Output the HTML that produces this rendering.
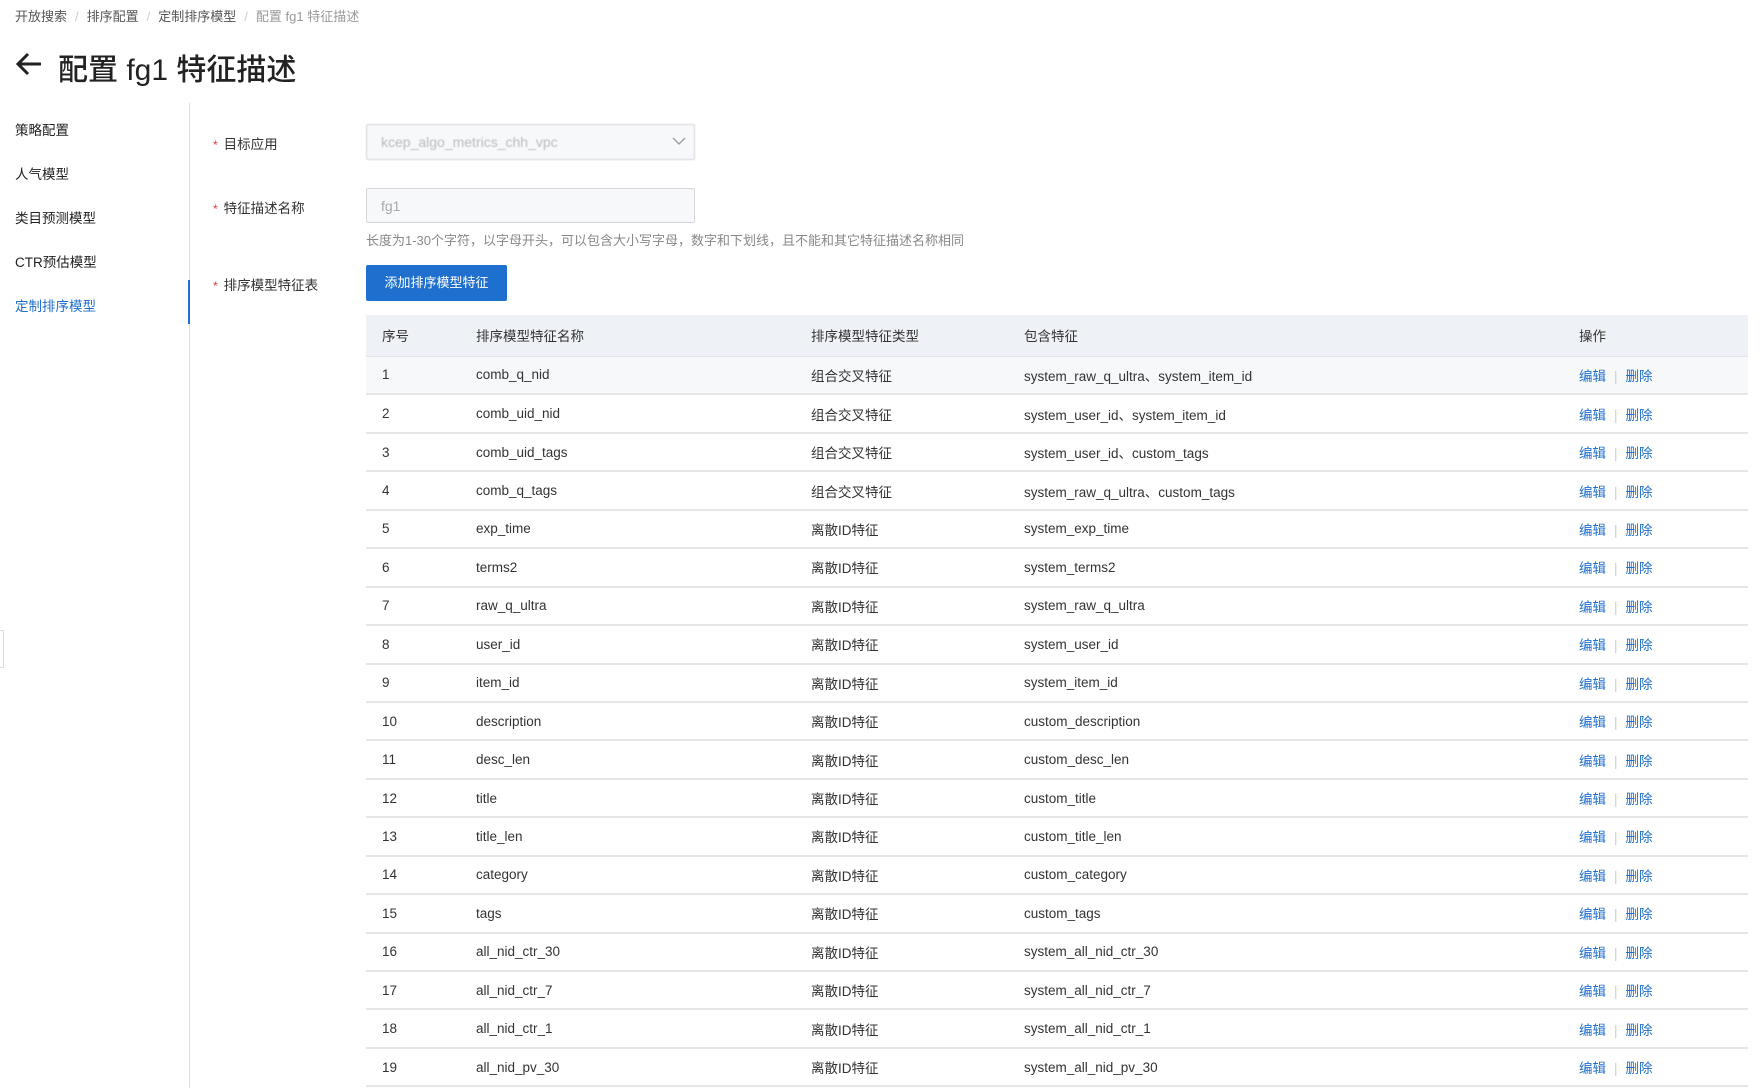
<!DOCTYPE html>
<html><head><meta charset="utf-8"><style>
*{box-sizing:border-box;margin:0;padding:0}
body{width:1762px;height:1088px;overflow:hidden;background:#fff;font-family:"Liberation Sans","Noto Sans CJK SC",sans-serif;color:#333;position:relative}
.a{position:absolute;white-space:nowrap}
.bc{top:6px;left:15px;font-size:13px;color:#555}
.bc span.s{color:#ccc;margin:0 8px}
.bc .last{color:#999}
.title{top:45px;left:58px;font-size:30px;color:#222;font-weight:500}
.side{left:15px;font-size:13.5px;color:#222}
.lbl{left:213px;font-size:13.5px;color:#333}
.lbl b{color:#e4393c;font-weight:normal;margin-right:6px;font-size:12px}
.box{left:366px;width:329px;border:1px solid #d4d6db;background:#f7f8fa;border-radius:2px}
table{position:absolute;left:366px;top:315px;width:1382px;border-collapse:collapse;font-size:13.5px;table-layout:fixed}
th{background:#eef1f6;height:41px;text-align:left;font-weight:normal;color:#333;border-bottom:1px solid #e2e4e8}
td{height:38.45px;border-bottom:2px solid #e6e6e6;color:#333}
tr.h td{background:#f7f8fa}
th:first-child,td:first-child{padding-left:16px}
.op{color:#1f6fce}.op i{font-style:normal;color:#ccc;margin:0 8px}
</style></head><body>
<div class="a bc">开放搜索<span class="s">/</span>排序配置<span class="s">/</span>定制排序模型<span class="s">/</span><span class="last">配置 fg1 特征描述</span></div>
<svg class="a" style="left:15px;top:52px" width="28" height="24" viewBox="0 0 28 24"><path d="M26 12H3M13 2L3 12l10 10" stroke="#222" stroke-width="3" fill="none"/></svg>
<div class="a title">配置 fg1 特征描述</div>
<div class="a side" style="top:119px">策略配置</div>
<div class="a side" style="top:163px">人气模型</div>
<div class="a side" style="top:207px">类目预测模型</div>
<div class="a side" style="top:251px">CTR预估模型</div>
<div class="a side" style="top:295px;color:#1f6fce">定制排序模型</div>
<div class="a" style="left:189px;top:103px;width:1px;height:985px;background:#ddd"></div>
<div class="a" style="left:188px;top:280px;width:2px;height:44px;background:#1f6fce"></div>
<div class="a" style="left:0;top:630px;width:4px;height:38px;border:1px solid #ddd;border-left:none;background:#fff"></div>
<div class="a lbl" style="top:133px"><b>*</b>目标应用</div>
<div class="a lbl" style="top:197px"><b>*</b>特征描述名称</div>
<div class="a lbl" style="top:274px"><b>*</b>排序模型特征表</div>
<div class="a box" style="top:124px;height:36px;padding:9px 14px;font-size:14px;color:#bbb;filter:blur(.6px)">kcep_algo_metrics_chh_vpc</div>
<svg class="a" style="left:672px;top:136px" width="14" height="10" viewBox="0 0 14 10"><path d="M1 2l6 6 6-6" stroke="#999" stroke-width="1.3" fill="none"/></svg>
<div class="a box" style="top:188px;height:35px;padding:9px 14px;font-size:14px;color:#aaa">fg1</div>
<div class="a" style="left:366px;top:230px;font-size:13px;color:#888">长度为1-30个字符，以字母开头，可以包含大小写字母，数字和下划线，且不能和其它特征描述名称相同</div>
<div class="a" style="left:366px;top:265px;width:141px;height:36px;background:#1f6fce;color:#fff;font-size:13px;line-height:36px;text-align:center;border-radius:2px">添加排序模型特征</div>
<table>
<colgroup><col style="width:110px"><col style="width:335px"><col style="width:213px"><col style="width:555px"><col style="width:169px"></colgroup>
<tr><th>序号</th><th>排序模型特征名称</th><th>排序模型特征类型</th><th>包含特征</th><th>操作</th></tr>
<tr class="h"><td>1</td><td>comb_q_nid</td><td>组合交叉特征</td><td>system_raw_q_ultra、system_item_id</td><td class="op">编辑<i>|</i>删除</td></tr>
<tr><td>2</td><td>comb_uid_nid</td><td>组合交叉特征</td><td>system_user_id、system_item_id</td><td class="op">编辑<i>|</i>删除</td></tr>
<tr><td>3</td><td>comb_uid_tags</td><td>组合交叉特征</td><td>system_user_id、custom_tags</td><td class="op">编辑<i>|</i>删除</td></tr>
<tr><td>4</td><td>comb_q_tags</td><td>组合交叉特征</td><td>system_raw_q_ultra、custom_tags</td><td class="op">编辑<i>|</i>删除</td></tr>
<tr><td>5</td><td>exp_time</td><td>离散ID特征</td><td>system_exp_time</td><td class="op">编辑<i>|</i>删除</td></tr>
<tr><td>6</td><td>terms2</td><td>离散ID特征</td><td>system_terms2</td><td class="op">编辑<i>|</i>删除</td></tr>
<tr><td>7</td><td>raw_q_ultra</td><td>离散ID特征</td><td>system_raw_q_ultra</td><td class="op">编辑<i>|</i>删除</td></tr>
<tr><td>8</td><td>user_id</td><td>离散ID特征</td><td>system_user_id</td><td class="op">编辑<i>|</i>删除</td></tr>
<tr><td>9</td><td>item_id</td><td>离散ID特征</td><td>system_item_id</td><td class="op">编辑<i>|</i>删除</td></tr>
<tr><td>10</td><td>description</td><td>离散ID特征</td><td>custom_description</td><td class="op">编辑<i>|</i>删除</td></tr>
<tr><td>11</td><td>desc_len</td><td>离散ID特征</td><td>custom_desc_len</td><td class="op">编辑<i>|</i>删除</td></tr>
<tr><td>12</td><td>title</td><td>离散ID特征</td><td>custom_title</td><td class="op">编辑<i>|</i>删除</td></tr>
<tr><td>13</td><td>title_len</td><td>离散ID特征</td><td>custom_title_len</td><td class="op">编辑<i>|</i>删除</td></tr>
<tr><td>14</td><td>category</td><td>离散ID特征</td><td>custom_category</td><td class="op">编辑<i>|</i>删除</td></tr>
<tr><td>15</td><td>tags</td><td>离散ID特征</td><td>custom_tags</td><td class="op">编辑<i>|</i>删除</td></tr>
<tr><td>16</td><td>all_nid_ctr_30</td><td>离散ID特征</td><td>system_all_nid_ctr_30</td><td class="op">编辑<i>|</i>删除</td></tr>
<tr><td>17</td><td>all_nid_ctr_7</td><td>离散ID特征</td><td>system_all_nid_ctr_7</td><td class="op">编辑<i>|</i>删除</td></tr>
<tr><td>18</td><td>all_nid_ctr_1</td><td>离散ID特征</td><td>system_all_nid_ctr_1</td><td class="op">编辑<i>|</i>删除</td></tr>
<tr><td>19</td><td>all_nid_pv_30</td><td>离散ID特征</td><td>system_all_nid_pv_30</td><td class="op">编辑<i>|</i>删除</td></tr>
</table>
</body></html>
